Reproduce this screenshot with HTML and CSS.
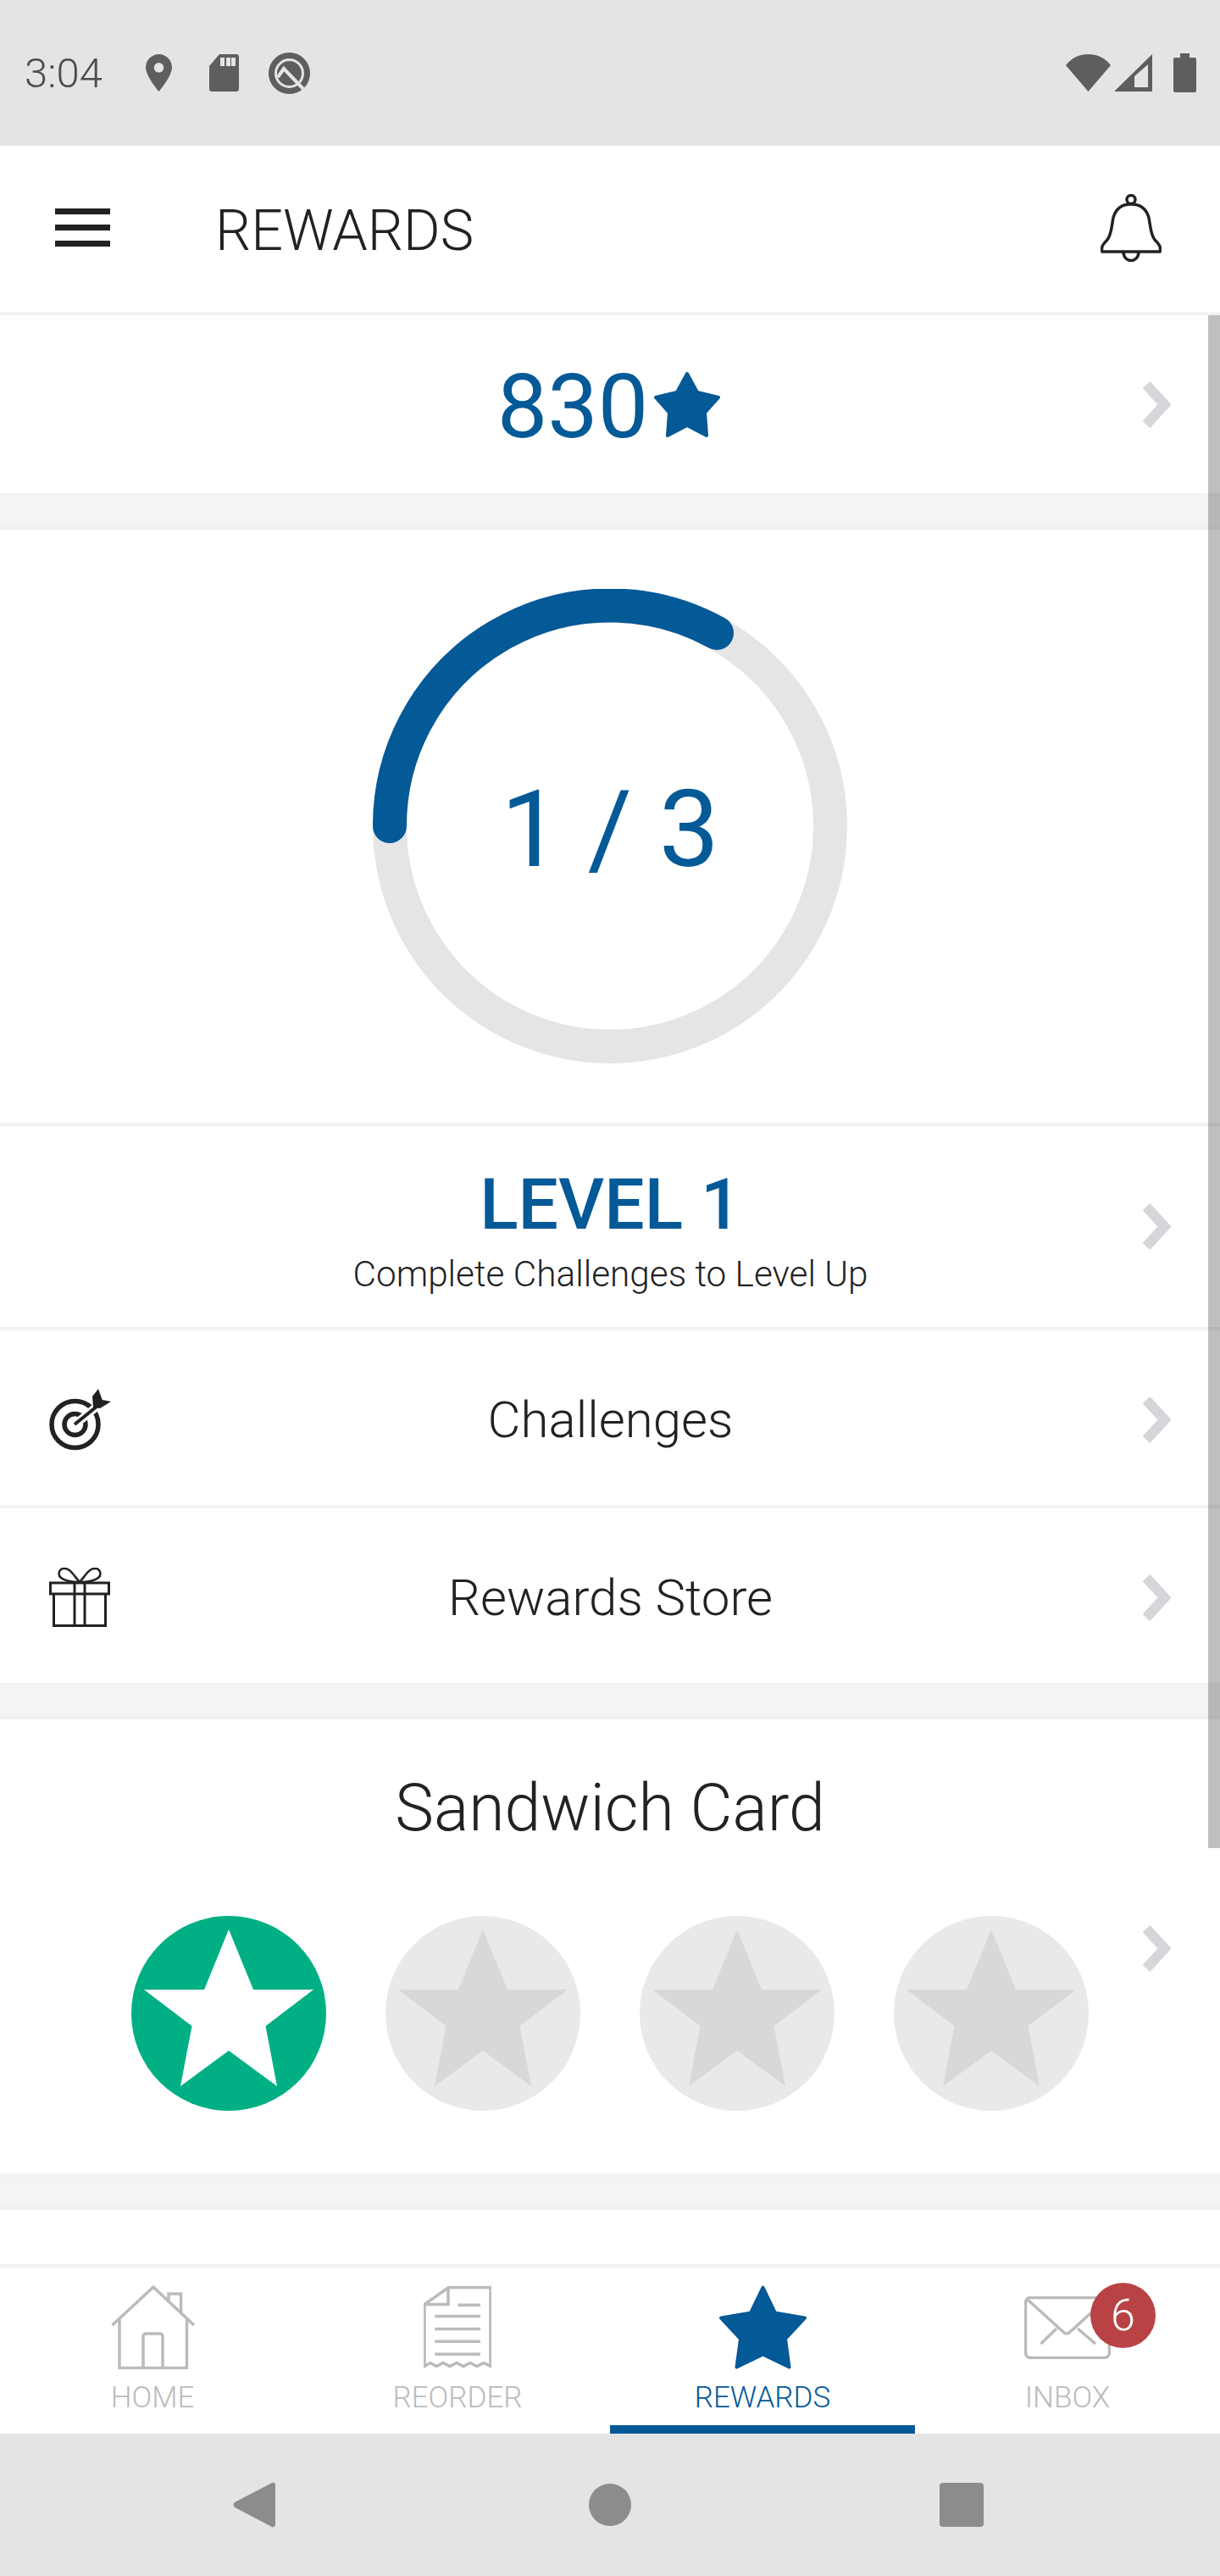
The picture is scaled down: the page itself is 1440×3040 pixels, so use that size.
FILE: index.html
```html
<!DOCTYPE html>
<html>
  <head>
    <title>Rewards</title>
    <link rel="stylesheet" href="styles.css">
  </head>
  <body>
    <div class="statusbar">
      <span class="clock">3:04</span>
      <svg class="ic-pin" viewBox="0 0 31 44"><path fill-rule="evenodd" d="M15.5 0C24 0 31 7 31 15.5 31 26 15.5 44 15.5 44S0 26 0 15.5C0 7 7 0 15.5 0ZM15.5 10a5.8 5.8 0 1 0 0 11.6 5.8 5.8 0 0 0 0-11.6Z"/></svg>
      <svg class="ic-sd" viewBox="0 0 35 44"><path fill-rule="evenodd" d="M12 0H32a3 3 0 0 1 3 3V41a3 3 0 0 1-3 3H3a3 3 0 0 1-3-3V14ZM13 4V14H18V4ZM20 4V14H25V4ZM26 4V14H31V4Z"/></svg>
      <svg class="ic-q" viewBox="0 0 49 49">
        <circle class="q-ring" cx="24.500" cy="24.500" r="21"/>
        <circle cx="24.500" cy="24.500" r="14.500"/>
        <path class="q-gap" d="M11 29 18 19 41 43"/>
      </svg>
      <span class="status-right">
        <svg class="ic-wifi" viewBox="0 0 53 44"><path d="M0 13C7 4 16 0 26.5 0S46 4 53 13L26.5 44Z"/></svg>
        <svg class="ic-signal" viewBox="0 0 45 44"><path fill-rule="evenodd" d="M45 0V44H0ZM40 12 24 26V39H40Z"/></svg>
        <svg class="ic-battery" viewBox="0 0 27 46"><path d="M8 0H19V5H25a2 2 0 0 1 2 2V44a2 2 0 0 1-2 2H2a2 2 0 0 1-2-2V7a2 2 0 0 1 2-2H8Z"/></svg>
      </span>
    </div>

    <div class="topbar">
      <div class="burger"><i></i><i></i><i></i></div>
      <div class="topbar-title">REWARDS</div>
      <svg class="ic-bell" viewBox="0 0 72 80">
        <circle cx="36" cy="6.500" r="5"/>
        <path d="M2 68C0 62 4 58 8 54 13 48 13 38 15 28 18 17 26 12 36 12S54 17 57 28C59 38 59 48 64 54 68 58 72 62 70 68Z"/>
        <path d="M27 68C27 82 45 82 45 68"/>
      </svg>
    </div>

    <div class="content">
      <div class="scrollthumb"></div>

      <div class="row row-points">
        <span></span>
        <div class="points">
          <span class="points-num">830</span>
          <svg class="ic-star-points" viewBox="0 0 78 77"><path d="M39 2 51 24 76 30 60 48 62 75 39 63 16 75 18 48 2 30 27 24Z"/></svg>
        </div>
        <svg class="chev" viewBox="0 0 34 55"><path d="M4 4 25.500 27.500 4 51"/></svg>
      </div>
      <div class="gap"></div>

      <div class="progress">
        <div class="ring">
          <svg viewBox="0 0 560 560">
            <circle class="ring-bg" cx="280" cy="280" r="260"/>
            <path class="ring-fg" d="M20 280A260 260 0 0 1 406 52"/>
          </svg>
          <div class="ring-label">1 / 3</div>
        </div>
      </div>

      <div class="row row-level">
        <span></span>
        <div class="level">
          <div class="level-name">LEVEL 1</div>
          <div class="level-sub">Complete Challenges to Level Up</div>
        </div>
        <svg class="chev" viewBox="0 0 34 55"><path d="M4 4 25.500 27.500 4 51"/></svg>
      </div>

      <div class="row row-link">
        <svg class="ic-target" viewBox="0 0 73 73">
          <circle cx="30.500" cy="42" r="27.500"/>
          <circle cx="30.500" cy="42" r="12.500"/>
          <path class="target-gap" d="M32 41 56 21"/>
          <path class="target-shaft" d="M30 42 56 21"/>
          <path class="target-head" d="M58 0 62.700 13 73 15 60 23 52 22 51 9Z"/>
        </svg>
        <div class="link-text">Challenges</div>
        <svg class="chev" viewBox="0 0 34 55"><path d="M4 4 25.500 27.500 4 51"/></svg>
      </div>

      <div class="row row-link">
        <svg class="ic-gift" viewBox="0 0 72 70">
          <path d="M1.500 18H70.500V31H1.500ZM5.500 31V68.500H66.500V31M30 18V68.500M42 18V68.500"/>
          <path class="bow" d="M36 17C28 8 25 1 18 1 11 1 10 9 14 12 19 16 28 17 36 17 44 17 53 16 58 12 62 9 61 1 54 1 47 1 44 8 36 17Z"/>
        </svg>
        <div class="link-text">Rewards Store</div>
        <svg class="chev" viewBox="0 0 34 55"><path d="M4 4 25.500 27.500 4 51"/></svg>
      </div>
      <div class="gap"></div>

      <div class="card">
        <div class="card-title">Sandwich Card</div>
        <div class="punches">
          <span></span>
          <div class="punch-list">
            <svg class="punch done" viewBox="0 0 230 230"><circle cx="115" cy="115" r="115"/><path d="M115 16 144 87H215L158.500 130 172 201 115 159 58 201 71.500 130 15 87H86Z"/></svg>
            <svg class="punch" viewBox="0 0 230 230"><circle cx="115" cy="115" r="115"/><path d="M115 16 144 87H215L158.500 130 172 201 115 159 58 201 71.500 130 15 87H86Z"/></svg>
            <svg class="punch" viewBox="0 0 230 230"><circle cx="115" cy="115" r="115"/><path d="M115 16 144 87H215L158.500 130 172 201 115 159 58 201 71.500 130 15 87H86Z"/></svg>
            <svg class="punch" viewBox="0 0 230 230"><circle cx="115" cy="115" r="115"/><path d="M115 16 144 87H215L158.500 130 172 201 115 159 58 201 71.500 130 15 87H86Z"/></svg>
          </div>
          <svg class="chev chev-card" viewBox="0 0 34 55"><path d="M4 4 25.500 27.500 4 51"/></svg>
        </div>
      </div>
      <div class="gap"></div>
    </div>

    <div class="tabs">
      <div class="tab">
        <svg class="ic-home" viewBox="0 0 99 99"><path d="M1.500 47 50 2 98 47M10 38V97.500H89.500V38M38 97.500V60a3 3 0 0 1 3-3H58a3 3 0 0 1 3 3V97.500M68 18V10H82.600V32"/></svg>
        <div class="tab-label">HOME</div>
      </div>
      <div class="tab">
        <svg class="ic-receipt" viewBox="0 0 80 96"><path d="M29.400 1H79V94L71 90 63 94 55 90 47 94 39 90 31 94 23 90 15 94 8 90 1 94V21ZM29 2V21H1M40.400 21.700H67M13.300 35H67M13.300 50H67M13.300 64.700H67M13.300 79.700H67"/></svg>
        <div class="tab-label">REORDER</div>
      </div>
      <div class="tab tab-active">
        <svg class="ic-star-tab" viewBox="0 0 103 98"><path d="M51.500 2 66 32 101 38 78 62.700 82.500 96 51.500 81 20.500 96 25 62.700 2 38 37 32Z"/></svg>
        <div class="tab-label">REWARDS</div>
      </div>
      <div class="tab">
        <div class="inbox">
          <svg class="ic-mail" viewBox="0 0 102 74">
            <rect x="1.500" y="1.500" width="99" height="71" rx="6"/>
            <path d="M3 3 46 42Q50 46 54 42L97 3M38 38 19.500 56M63 38 84 56"/>
          </svg>
          <span class="badge">6</span>
        </div>
        <div class="tab-label">INBOX</div>
      </div>
    </div>

    <div class="navbar">
      <svg class="ic-back" viewBox="0 0 50 56"><path d="M46 2a3 3 0 0 1 4 2V52a3 3 0 0 1-4 2L2 31a4 4 0 0 1 0-6Z"/></svg>
      <span class="nav-home"></span>
      <span class="nav-recent"></span>
    </div>
  </body>
</html>
```

FILE: styles.css
```css
* {
  box-sizing: border-box;
}

html, body {
  margin: 0;
  padding: 0;
}

body {
  width: 1440px;
  height: 3040px;
  display: flex;
  flex-direction: column;
  overflow: hidden;
  background: #fff;
  color: #222;
  font-family: Roboto, sans-serif;
}

svg {
  display: block;
  flex: none;
}

/* status bar */
.statusbar {
  height: 172px;
  background: #e4e4e4;
  display: flex;
  align-items: center;
  padding: 0 28px 0 29px;
  color: #4c4c4c;
  fill: #5e5e5e;
}

.clock {
  font-size: 49px;
  font-weight: 300;
  width: 143px;
}

.ic-pin {
  width: 31px;
  height: 44px;
  margin-right: 44px;
}

.ic-sd {
  width: 35px;
  height: 44px;
  margin-right: 35px;
}

.ic-q {
  width: 49px;
  height: 49px;
}

.q-ring {
  fill: none;
  stroke: #5e5e5e;
  stroke-width: 7px;
}

.q-gap {
  fill: none;
  stroke: #e4e4e4;
  stroke-width: 4px;
}

.status-right {
  margin-left: auto;
  display: flex;
  align-items: center;
}

.ic-wifi {
  width: 53px;
  height: 44px;
  margin-right: 4px;
}

.ic-signal {
  width: 45px;
  height: 44px;
  margin-right: 25px;
}

.ic-battery {
  width: 27px;
  height: 46px;
}

/* top bar */
.topbar {
  height: 200px;
  border-bottom: 4px solid #f3f3f3;
  display: flex;
  align-items: center;
  padding: 0 69px 0 65px;
}

.burger {
  width: 65px;
  margin: 0 124px 3px 0;
}

.burger i {
  display: block;
  height: 7px;
  background: #222;
  margin-bottom: 12px;
}

.burger i:last-child {
  margin-bottom: 0;
}

.topbar-title {
  font-size: 66.500px;
  font-weight: 300;
  padding-top: 4px;
}

.ic-bell {
  width: 72px;
  height: 80px;
  margin: 0 0 2px auto;
  fill: none;
  stroke: #222;
  stroke-width: 3.500px;
}

/* scrolling content */
.content {
  flex: 1;
  position: relative;
  overflow: hidden;
}

.scrollthumb {
  position: absolute;
  top: 0;
  right: 0;
  width: 14px;
  height: 1809px;
  background: rgba(0, 0, 0, 0.25);
}

.row {
  display: grid;
  grid-template-columns: 1fr auto 1fr;
  align-items: center;
  padding: 0 57px 0 58px;
  border-bottom: 4px solid #f2f2f2;
}

.row > .chev {
  justify-self: end;
}

.row-points {
  height: 214px;
}

.row-level {
  height: 241px;
}

.row-link {
  height: 210px;
  padding-top: 4px;
}

.chev {
  width: 34px;
  height: 55px;
  fill: none;
  stroke: #d6d6da;
  stroke-width: 12px;
}

.gap {
  height: 39px;
  background: #f4f4f4;
  border-bottom: 4px solid #f0f0f0;
}

.points {
  display: flex;
  align-items: center;
  gap: 7px;
  color: #045997;
  font-size: 106px;
  line-height: 1;
}

.points-num {
  padding-top: 6px;
}

.ic-star-points {
  width: 78px;
  height: 77px;
  margin-right: 4px;
}

.ic-star-points path, .ic-star-tab path {
  fill: #045997;
  stroke: #045997;
  stroke-width: 4px;
  stroke-linejoin: round;
}

.progress {
  height: 704px;
  padding-top: 70px;
  border-bottom: 4px solid #f2f2f2;
}

.ring {
  width: 560px;
  height: 560px;
  margin: 0 auto;
  display: grid;
  place-items: center;
  position: relative;
}

.ring svg {
  position: absolute;
  top: 0;
  left: 0;
  width: 560px;
  height: 560px;
  fill: none;
  stroke-width: 40px;
}

.ring-bg {
  stroke: #e5e5e5;
}

.ring-fg {
  stroke: #045997;
  stroke-linecap: round;
}

.ring-label {
  position: relative;
  font-size: 127px;
  line-height: 1;
  color: #045997;
  padding-top: 6px;
}

.level {
  text-align: center;
}

.level-name {
  color: #045997;
  font-size: 84px;
  font-weight: 500;
  line-height: 112px;
}

.level-sub {
  font-size: 42.300px;
  font-weight: 300;
  line-height: 52px;
}

.link-text {
  font-size: 60px;
  font-weight: 300;
}

.ic-target {
  width: 73px;
  height: 73px;
  fill: none;
  stroke: #222;
  stroke-width: 5.500px;
}

.target-gap {
  stroke: #fff;
  stroke-width: 10px;
}

.target-shaft {
  stroke-width: 4px;
}

.target-head {
  fill: #222;
  stroke: none;
}

.ic-gift {
  width: 72px;
  height: 70px;
  fill: none;
  stroke: #222;
  stroke-width: 3px;
}

.bow {
  stroke-width: 2.500px;
}

/* card */
.card {
  height: 540px;
  border-bottom: 4px solid #f2f2f2;
  text-align: center;
  padding-top: 60px;
}

.card-title {
  font-size: 77px;
  font-weight: 300;
  line-height: 90px;
  margin-bottom: 82px;
}

.punches {
  display: grid;
  grid-template-columns: 155px auto 155px;
}

.punch-list {
  display: flex;
  gap: 70px;
}

.punch {
  width: 230px;
  height: 230px;
  fill: #e9e9e9;
}

.punch path {
  fill: #d8d8d8;
}

.punch.done {
  fill: #00af84;
}

.punch.done path {
  fill: #fff;
}

.chev-card {
  justify-self: end;
  margin: 11px 57px 0 0;
}

/* bottom tabs */
.tabs {
  height: 200px;
  display: flex;
  flex: none;
  border-top: 4px solid #f0f0f0;
}

.tab {
  width: 360px;
  height: 196px;
  display: flex;
  flex-direction: column;
  align-items: center;
  color: #bbb;
  padding-top: 21px;
}

.tab svg {
  height: 99px;
}

.tab-active {
  color: #045997;
  border-bottom: 10px solid #045997;
}

.tab-label {
  font-size: 35px;
  font-weight: 300;
  line-height: 40px;
  margin-top: 14px;
}

.ic-home, .ic-receipt, .ic-mail {
  fill: none;
  stroke: #bbb;
  stroke-width: 3.500px;
}

.ic-home {
  width: 99px;
}

.ic-receipt {
  width: 80px;
}

.ic-star-tab {
  width: 103px;
}

.inbox {
  height: 99px;
  position: relative;
  display: flex;
  align-items: center;
}

.tab .ic-mail {
  width: 102px;
  height: 74px;
}

.badge {
  position: absolute;
  top: -3px;
  left: 78px;
  width: 77px;
  height: 77px;
  border-radius: 50%;
  background: #b94344;
  color: #fff;
  font-size: 52px;
  font-weight: 300;
  line-height: 77px;
  text-align: center;
}

/* android nav */
.navbar {
  height: 168px;
  flex: none;
  background: #e4e4e4;
  display: flex;
  align-items: center;
  padding-left: 275px;
}

.ic-back {
  width: 50px;
  height: 56px;
  fill: #8c8c8c;
  margin-right: 370px;
}

.nav-home {
  width: 50px;
  height: 50px;
  border-radius: 50%;
  background: #8c8c8c;
  margin-right: 364px;
}

.nav-recent {
  width: 52px;
  height: 52px;
  border-radius: 4px;
  background: #8c8c8c;
}
```
